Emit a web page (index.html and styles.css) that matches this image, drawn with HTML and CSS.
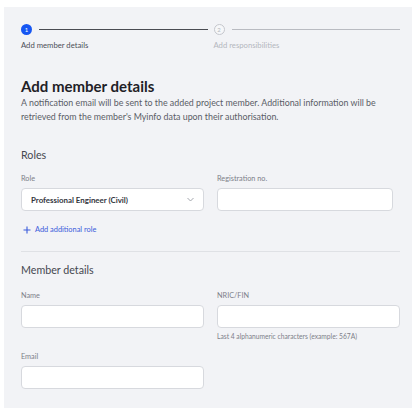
FILE: index.html
```html
<!DOCTYPE html>
<html>
<head>
<meta charset="utf-8">
<link rel="stylesheet" href="styles.css">
</head>
<body>
<div class="panel">
  <div class="stepper">
    <div class="step">
      <div class="step-track">
        <span class="dot dot-active">1</span>
        <span class="line line-active"></span>
      </div>
      <div class="step-label">Add member details</div>
    </div>
    <div class="step">
      <div class="step-track">
        <span class="dot dot-idle">2</span>
        <span class="line line-idle"></span>
      </div>
      <div class="step-label step-label-idle">Add responsibilities</div>
    </div>
  </div>

  <h1 class="title">Add member details</h1>
  <p class="desc">A notification email will be sent to the added project member. Additional information will be retrieved from the member's Myinfo data upon their authorisation.</p>

  <h2 class="section section-roles">Roles</h2>
  <div class="row row-roles">
    <div class="field">
      <label class="label">Role</label>
      <div class="input select">
        <span>Professional Engineer (Civil)</span>
        <svg width="7" height="5" viewBox="0 0 7 5"><path d="M0.5 1 L3.5 4 L6.5 1" fill="none" stroke="#9a9da5" stroke-width="0.9"/></svg>
      </div>
    </div>
    <div class="field field-reg">
      <label class="label">Registration no.</label>
      <div class="input"></div>
    </div>
  </div>
  <div class="add-role">
    <svg width="8" height="8" viewBox="0 0 8 8"><path d="M4 0.5 V7.5 M0.5 4 H7.5" stroke="#3b5bdb" stroke-width="1.1"/></svg>
    <span>Add additional role</span>
  </div>

  <div class="divider"></div>

  <h2 class="section section-member">Member details</h2>
  <div class="row row-member">
    <div class="field">
      <label class="label">Name</label>
      <div class="input"></div>
    </div>
    <div class="field">
      <label class="label">NRIC/FIN</label>
      <div class="input"></div>
      <div class="hint">Last 4 alphanumeric characters (example: 567A)</div>
    </div>
  </div>
  <div class="row row-email">
    <div class="field">
      <label class="label">Email</label>
      <div class="input"></div>
    </div>
    <div class="field"></div>
  </div>
</div>
</body>
</html>
```

FILE: styles.css
```css
* { box-sizing: border-box; }
html, body { margin: 0; padding: 0; background: #ffffff; }
body {
  font-family: Lato, "Noto Sans", sans-serif;
  color: #2b2d33;
  padding: 7px 7px 0 4px;
}
.panel {
  background: #f2f3f6;
  width: 408px;
  height: 401px;
  padding: 17px 12px 0 17px;
}
.stepper { display: flex; gap: 6px; }
.step { flex: 1; }
.step-track { display: flex; align-items: center; gap: 7px; height: 11px; }
.dot {
  width: 11px; height: 11px; border-radius: 50%;
  display: flex; align-items: center; justify-content: center;
  font-size: 6px; flex: none;
}
.dot-active { background: #1656f2; color: #fff; }
.dot-idle { border: 1px solid #c5c7cd; color: #b4b7be; background: #f6f7f9; }
.line { flex: 1; height: 1px; }
.line-active { background: #4a4c52; }
.line-idle { background: #b9bbc1; }
.step-label { font-size: 7.7px; line-height: 9px; color: #4c4f57; margin-top: 6px; }
.step-label-idle { color: #b4b7be; }

.title { font-size: 15px; font-weight: 700; margin: 27px 0 0 0; color: #1f2126; line-height: 18px; }
.desc { font-size: 8.85px; line-height: 14px; color: #5a5d66; margin: 1px 0 0 0; }
.section { font-size: 10.7px; font-weight: 400; color: #454850; line-height: 14px; margin: 0; }
.section-roles { margin-top: 24px; }
.section-member { margin-top: 11px; }
.row { display: grid; grid-template-columns: 183px 183px; column-gap: 13px; }
.row-roles { margin-top: 12px; }
.row-member { margin-top: 14px; }
.row-email { margin-top: 12px; }
.field-reg { padding-right: 7px; }
.label { display: block; font-size: 7.3px; color: #7d8089; line-height: 9px; margin-bottom: 5px; }
.input {
  height: 23px; background: #fff; border: 1px solid #d7d9de; border-radius: 4px;
}
.select {
  display: flex; align-items: center; justify-content: space-between;
  padding: 0 9px 0 9px; font-size: 7.9px; font-weight: 700; color: #33363d;
}
.add-role {
  display: flex; align-items: center; gap: 4px; margin: 14px 0 0 2px;
  font-size: 7.4px; line-height: 10px; color: #3b5bdb;
}
.divider { height: 1px; background: #dfe1e5; margin: 16px 0 0 0; }
.hint { font-size: 6.7px; line-height: 8px; color: #7d8089; margin-top: 4px; }
```
